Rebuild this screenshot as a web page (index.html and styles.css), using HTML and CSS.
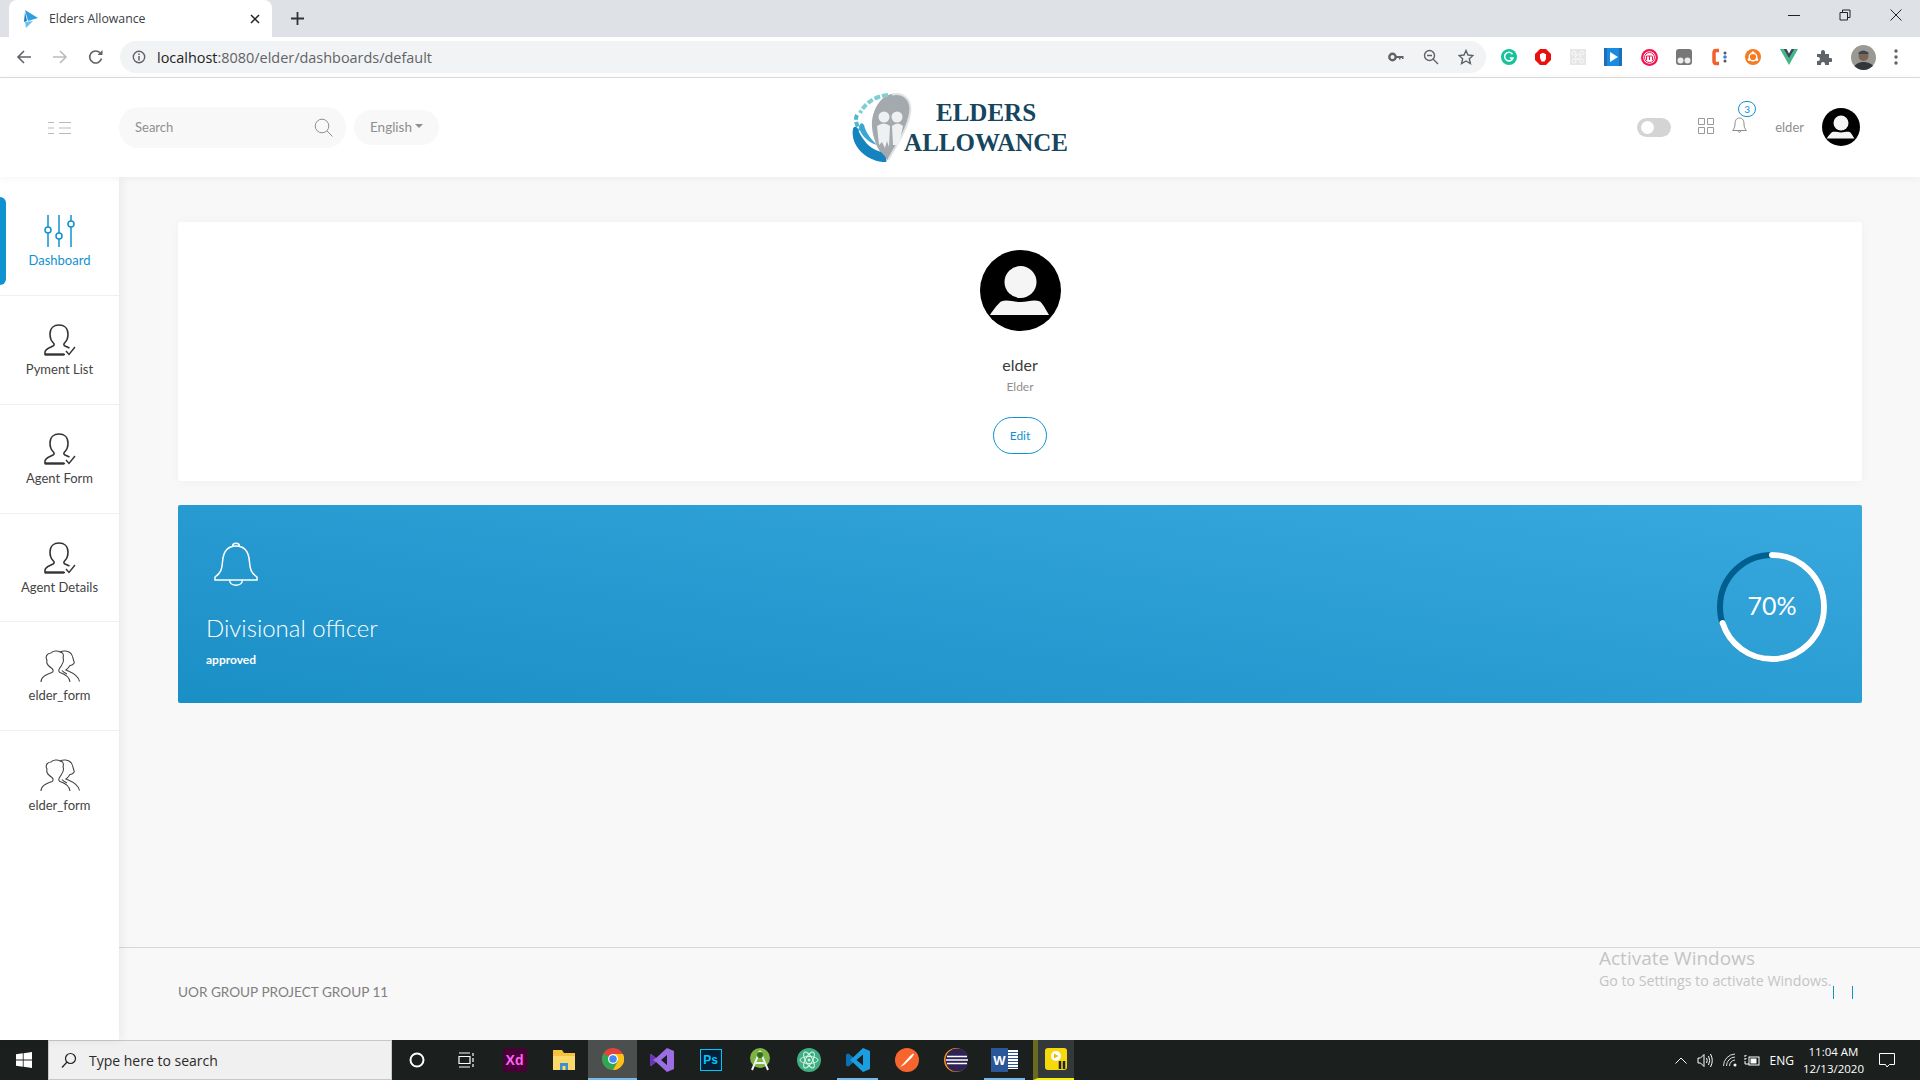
FILE: index.html
```html
<!DOCTYPE html>
<html lang="en">
<head>
    <meta charset="UTF-8">
    <meta name="viewport" content="width=device-width, initial-scale=1.0">
    <title>Elders Allowance</title>
    <link rel="stylesheet" href="styles.css">
</head>
<body>

<svg class="defs" width="0" height="0">
    <symbol id="person-check" viewBox="0 0 33 32">
        <path d="M22 30.5H2V28C2 25 6 24 10 22C11.500 21 11.500 20 10 18.500C8 16.500 7 14 7 10C7 4 11 1 16 1C21 1 25 4 25 10C25 14 24 16.500 22 18.500C20.500 20 20.500 21 22 22L26.500 24" fill="none" stroke="#333" stroke-width="1.600"/>
        <path d="M2 30.500H21" stroke="#333" stroke-width="2.200"/>
        <path d="M23 27L26 30.500L32 23" fill="none" stroke="#333" stroke-width="1.400"/>
    </symbol>
    <symbol id="people" viewBox="0 0 40 32">
        <path d="M1 32C1 27 5 25 12 22.500C13.500 21.500 13.500 20 12 18.500C8 16 6 13 7 10C5 7 7 3 11 3C13 0.500 18 0.500 20 2C23 2 24 5 23 8C25 11 22 15 19.500 18.500C18.500 20 18.500 21.500 20 22.500C26 24.500 29.500 27 30 32" fill="none" stroke="#444" stroke-width="1.100"/>
        <path d="M20 2C23 0.500 28 0.500 31 3.500C33 6 33 9 34 11.500C35 13 33 15 30 15.500C29 17 28 18.500 26 20C30 22 38 24 39.500 31.500M22 20.500C23 22 25 23 27 24" fill="none" stroke="#444" stroke-width="1.100"/>
    </symbol>
    <symbol id="avatar" viewBox="0 0 81 81">
        <circle cx="40.500" cy="40.500" r="40.500" fill="#000"/>
        <circle cx="40.500" cy="32" r="16" fill="#f5f5f5"/>
        <path d="M21 51.500C27 49 33 52 40.500 52C48 52 54 49 60 51.500C63 54 66 60 69 65H10C13 60 18 54 21 51.500Z" fill="#f5f5f5"/>
    </symbol>
</svg>

<header class="tabstrip">
    <div class="tab">
        <svg class="favicon" width="14" height="18" viewBox="0 0 14 18"><path d="M1 0L14 8L4 11Z" fill="#2d9fe0"/><path d="M1 2L3 11L0 12Z" fill="#1679bd"/><path d="M1 12L9 11L2 18Z" fill="#6cc0ee"/></svg>
        <span class="tab-title">Elders Allowance</span>
        <svg class="tab-close" width="10" height="10" viewBox="0 0 10 10"><path d="M1 1L9 9M9 1L1 9" stroke="#222" stroke-width="1.500"/></svg>
    </div>
    <svg class="tab-new" width="13" height="13" viewBox="0 0 13 13"><path d="M6.500 0V13M0 6.500H13" stroke="#333" stroke-width="1.800"/></svg>
    <div class="window-controls">
        <svg width="12" height="12" viewBox="0 0 12 12"><path d="M0 6.500H12" stroke="#222"/></svg>
        <svg width="12" height="12" viewBox="0 0 12 12"><path d="M1 3.500H8.500V11H1ZM3.500 3.500V1H11V8.500H8.500" fill="none" stroke="#222"/></svg>
        <svg width="12" height="12" viewBox="0 0 12 12"><path d="M0.500 0.500L11.500 11.500M11.500 0.500L0.500 11.500" stroke="#222"/></svg>
    </div>
</header>

<nav class="toolbar">
    <div class="toolbar-nav">
        <svg width="16" height="16" viewBox="0 0 16 16"><path d="M15 8H2M8 2L2 8L8 14" fill="none" stroke="#5f6368" stroke-width="1.600"/></svg>
        <svg width="16" height="16" viewBox="0 0 16 16"><path d="M1 8H14M8 2L14 8L8 14" fill="none" stroke="#babcbe" stroke-width="1.600"/></svg>
        <svg width="16" height="16" viewBox="0 0 16 16"><path d="M13.500 9.500A6 6 0 1 1 12 3.800" fill="none" stroke="#5f6368" stroke-width="1.600"/><path d="M14.500 1V6H9.500Z" fill="#5f6368"/></svg>
    </div>
    <div class="omnibox">
        <svg width="14" height="14" viewBox="0 0 14 14"><circle cx="7" cy="7" r="5.700" fill="none" stroke="#5f6368" stroke-width="1.400"/><path d="M7 6V10.500M7 3.500V5" stroke="#5f6368" stroke-width="1.500"/></svg>
        <span class="url"><b>localhost</b>:8080/elder/dashboards/default</span>
        <div class="omnibox-icons">
            <svg width="16" height="10" viewBox="0 0 16 10"><circle cx="4.500" cy="5" r="3.200" fill="none" stroke="#5f6368" stroke-width="2.400"/><path d="M7 4H15.500V7H14V6H12.500V7.500H11V6H7Z" fill="#5f6368"/></svg>
            <svg width="16" height="16" viewBox="0 0 16 16"><circle cx="6.500" cy="6.500" r="5" fill="none" stroke="#5f6368" stroke-width="1.400"/><path d="M4 6.500H9M10 10L15 15" stroke="#5f6368" stroke-width="1.400"/></svg>
            <svg width="16" height="16" viewBox="0 0 16 16"><path d="M8 1.500L10 6L15 6.500L11.300 9.700L12.400 14.500L8 12L3.600 14.500L4.700 9.700L1 6.500L6 6Z" fill="none" stroke="#5f6368" stroke-width="1.400"/></svg>
        </div>
    </div>
    <div class="extensions">
        <svg width="16" height="16" viewBox="0 0 16 16"><circle cx="8" cy="8" r="8" fill="#15c39a"/><path d="M11.500 5.200A4.300 4.300 0 1 0 12 9H8.800" fill="none" stroke="#fff" stroke-width="1.600"/></svg>
        <svg width="16" height="16" viewBox="0 0 16 16"><path d="M5 0H11L16 5V11L11 16H5L0 11V5Z" fill="#e8110f"/><path d="M5 9V5H6.500V4H8V4H9.500V5H11V10L9.500 12.500H6.500Z" fill="#fff"/></svg>
        <svg width="16" height="16" viewBox="0 0 16 16"><rect width="16" height="16" fill="#e6e6e6"/><circle cx="8" cy="8" r="2.500" fill="none" stroke="#fafafa"/><circle cx="4" cy="4" r="2" fill="none" stroke="#fafafa"/><circle cx="12" cy="4" r="2" fill="none" stroke="#fafafa"/><circle cx="4" cy="12" r="2" fill="none" stroke="#fafafa"/><circle cx="12" cy="12" r="2" fill="none" stroke="#fafafa"/></svg>
        <svg width="18" height="18" viewBox="0 0 18 18"><rect width="18" height="18" fill="#1d6fb8"/><rect x="3" width="12" height="18" fill="#1a8ce0"/><path d="M6 4L14 9L6 14Z" fill="#fff"/></svg>
        <svg width="17" height="17" viewBox="0 0 17 17"><circle cx="8.500" cy="8.500" r="8.500" fill="#f5124f"/><circle cx="8.500" cy="8.500" r="6.200" fill="#fff"/><circle cx="8.500" cy="8.500" r="5" fill="none" stroke="#f5124f"/><path d="M5.500 11V7H10.800Q11.500 7 11.500 8V11M8.500 7V11" fill="none" stroke="#f5124f"/></svg>
        <svg width="16" height="16" viewBox="0 0 16 16"><rect width="16" height="16" rx="3" fill="#777"/><circle cx="4.500" cy="11.500" r="3" fill="#eee"/><circle cx="11.500" cy="11.500" r="3" fill="#eee"/></svg>
        <svg width="16" height="18" viewBox="0 0 16 18"><path d="M8 2.500H5Q3 2.500 3 5V13Q3 15.500 5 15.500H8" fill="none" stroke="#f4602c" stroke-width="3.500"/><circle cx="14" cy="5" r="1.500" fill="#555"/><circle cx="14" cy="9" r="1.800" fill="#3b82e0"/><circle cx="14" cy="13" r="1.500" fill="#555"/></svg>
        <svg width="16" height="16" viewBox="0 0 16 16"><circle cx="8" cy="8" r="8" fill="#f57a20"/><circle cx="8" cy="8" r="3.800" fill="none" stroke="#fff" stroke-width="1.400"/><circle cx="8" cy="3.800" r="1.500" fill="#fff"/><circle cx="4.200" cy="10.500" r="1.500" fill="#fff"/><circle cx="11.800" cy="10.500" r="1.500" fill="#fff"/></svg>
        <svg width="18" height="16" viewBox="0 0 18 16"><path d="M0 0H3.500L9 9.500L14.500 0H18L9 16Z" fill="#41b883"/><path d="M3.500 0H6.500L9 4.500L11.500 0H14.500L9 9.500Z" fill="#35495e"/></svg>
        <svg width="16" height="16" viewBox="0 0 16 16"><path d="M1 5H5V3A2 2 0 0 1 9 3V5H13V9H14.500A2 2 0 0 1 14.500 13H13V16H9V15A2 2 0 0 0 5 15V16H1V12H2A2 2 0 0 0 2 8H1Z" fill="#5f6368"/></svg>
        <svg width="25" height="25" viewBox="0 0 25 25"><defs><clipPath id="profile-clip"><circle cx="12.500" cy="12.500" r="12.500"/></clipPath></defs><g clip-path="url(#profile-clip)"><rect width="25" height="25" fill="#9a9a94"/><path d="M2 25C3 19 8 17 12.500 17C17 17 23 19 24 25Z" fill="#33363a"/><circle cx="12.500" cy="11" r="5" fill="#7d6454"/><path d="M7 8Q12 3 18 8L17 9H8Z" fill="#3a4650"/></g></svg>
        <svg width="4" height="16" viewBox="0 0 4 16"><circle cx="2" cy="2" r="1.700" fill="#5f6368"/><circle cx="2" cy="8" r="1.700" fill="#5f6368"/><circle cx="2" cy="14" r="1.700" fill="#5f6368"/></svg>
    </div>
</nav>

<div class="app-header">
    <div class="header-left">
        <div class="menu-btn">
            <svg width="23" height="12" viewBox="0 0 23 12"><path d="M0 .5H6M0 6H6M0 11.500H6M11 .5H23M11 6H23M11 11.500H23" stroke="#b9b9b9"/></svg>
        </div>
        <div class="search-box">
            <span>Search</span>
            <svg width="19" height="19" viewBox="0 0 19 19"><circle cx="8" cy="8" r="6.800" fill="none" stroke="#8f8f8f"/><path d="M13 13L18.500 18.500" stroke="#8f8f8f"/></svg>
        </div>
        <div class="lang-pill"><span>English</span><i class="caret"></i></div>
    </div>
    <div class="logo">
        <svg class="logo-mark" width="60" height="70" viewBox="0 0 60 70">
            <path d="M40 1C52 -1 60 7 58 20C56 34 46 50 36 67C28 62 21 48 20 34C19 20 27 3 40 1Z" fill="#a4a9ae"/>
            <path d="M40 1.500C52 -1 60 7 58 20C56 34 46 50 36.500 66" fill="none" stroke="#dfe2e5" stroke-width="2"/>
            <circle cx="32" cy="24" r="5.500" fill="#eef0f2"/>
            <circle cx="45" cy="24" r="5.500" fill="#eef0f2"/>
            <path d="M25 33Q32 28 38 33L37 54L35 48L33 55L30 49L27 52ZM40 33Q46 28 51 33L47 52H41Z" fill="#eef0f2"/>
            <path d="M36 2C24 3 14 9 8 20" fill="none" stroke="#7ccfd2" stroke-width="4" stroke-dasharray="6 2"/>
            <path d="M5 22C3 26 4 32 8 37" fill="none" stroke="#4fb9c9" stroke-width="4" stroke-dasharray="5 2"/>
            <path d="M1 36C-2 52 14 69 34 69C36 66 32 62 29 59C22 57 15 52 12 47C9 43 7 40 6 36C4 33 2 33 1 36Z" fill="#1583bd"/>
            <path d="M7 34C8 41 15 49 25 52C19 46 14 40 12 32C10 29 8 30 7 34Z" fill="#3ba6d2"/>
        </svg>
        <div class="logo-text">
            <span>ELDERS</span>
            <span>ALLOWANCE</span>
        </div>
    </div>
    <div class="header-right">
        <div class="toggle"><i></i></div>
        <svg class="grid-icon" width="16" height="16" viewBox="0 0 16 16"><path d="M.5 .5H6.500V6.500H.5ZM9.500 .5H15.500V6.500H9.500ZM.5 9.500H6.500V15.500H.5ZM9.500 9.500H15.500V15.500H9.500Z" fill="none" stroke="#999"/></svg>
        <div class="bell">
            <svg width="15" height="17" viewBox="0 0 15 17"><path d="M7.500 1C4 1 3 4 3 7C3 10 2 12 .5 13.500H14.500C13 12 12 10 12 7C12 4 11 1 7.500 1ZM5.500 13.500Q7.500 17 9.500 13.500" fill="none" stroke="#8c8c8c"/></svg>
            <span class="badge">3</span>
        </div>
        <span class="user-name">elder</span>
        <svg class="header-avatar" width="38" height="38"><use href="#avatar"/></svg>
    </div>
</div>

<div class="app-body">
    <aside class="sidebar">
        <a class="nav-item active">
            <svg width="33" height="32" viewBox="0 0 33 32"><path d="M5 0V12M5 18V32M16 0V18M16 24V32M28 0V6M28 12V32" stroke="#0f92d0" stroke-width="1.500"/><circle cx="5" cy="15" r="3" fill="none" stroke="#0f92d0" stroke-width="1.500"/><circle cx="16" cy="21" r="3" fill="none" stroke="#0f92d0" stroke-width="1.500"/><circle cx="28" cy="9" r="3" fill="none" stroke="#0f92d0" stroke-width="1.500"/></svg>
            <span>Dashboard</span>
        </a>
        <a class="nav-item"><svg width="33" height="32"><use href="#person-check"/></svg><span>Pyment List</span></a>
        <a class="nav-item"><svg width="33" height="32"><use href="#person-check"/></svg><span>Agent Form</span></a>
        <a class="nav-item"><svg width="33" height="32"><use href="#person-check"/></svg><span>Agent Details</span></a>
        <a class="nav-item"><svg width="40" height="32"><use href="#people"/></svg><span>elder_form</span></a>
        <a class="nav-item"><svg width="40" height="32"><use href="#people"/></svg><span>elder_form</span></a>
    </aside>

    <main class="content">
        <section class="card profile-card">
            <svg width="81" height="81"><use href="#avatar"/></svg>
            <div class="profile-name">elder</div>
            <div class="profile-role">Elder</div>
            <button class="edit-btn">Edit</button>
        </section>

        <section class="status-card">
            <div class="status-info">
                <svg width="44" height="44" viewBox="0 0 44 44"><path d="M22 4C12 4 9 12 8.500 20C8 27 7 31 1 35V38H43V35C37 31 36 27 35.500 20C35 12 32 4 22 4ZM18.500 4.500C18.500 0 25.500 0 25.500 4.500M15.500 38C16 45 28 45 28.500 38" fill="none" stroke="#fff" stroke-width="1.500"/></svg>
                <h3>Divisional officer</h3>
                <p>approved</p>
            </div>
            <div class="ring">
                <svg width="110" height="110" viewBox="0 0 110 110">
                    <circle cx="55" cy="55" r="52" fill="none" stroke="#005f8e" stroke-width="6"/>
                    <circle class="ring-value" cx="55" cy="55" r="52" fill="none" stroke="#fff" stroke-width="6" pathLength="100" stroke-dasharray="70 30" stroke-linecap="round"/>
                </svg>
                <span>70%</span>
            </div>
        </section>

        <footer class="footer">
            <span>UOR GROUP PROJECT GROUP 11</span>
            <div class="footer-links"><i></i><i></i></div>
        </footer>
    </main>
</div>

<div class="watermark">
    <div class="wm-title">Activate Windows</div>
    <div class="wm-sub">Go to Settings to activate Windows.</div>
</div>

<div class="taskbar">
    <div class="start">
        <svg width="16" height="16" viewBox="0 0 16 16"><path d="M0 2.300L6.800 1.300V7.600H0ZM7.600 1.200L16 0V7.600H7.600ZM0 8.400H6.800V14.700L0 13.700ZM7.600 8.400H16V16L7.600 14.800Z" fill="#fff"/></svg>
    </div>
    <div class="task-search">
        <svg width="16" height="16" viewBox="0 0 16 16"><circle cx="9.500" cy="6.500" r="5" fill="none" stroke="#222" stroke-width="1.200"/><path d="M6 10L1 15.500" stroke="#222" stroke-width="1.200"/></svg>
        <span>Type here to search</span>
    </div>
    <div class="task-apps">
        <div class="task-btn"><svg width="16" height="16" viewBox="0 0 16 16"><circle cx="8" cy="8" r="6.500" fill="none" stroke="#fff" stroke-width="2"/></svg></div>
        <div class="task-btn"><svg width="16" height="16" viewBox="0 0 16 16"><path d="M1 4.500H12V11.500H1ZM1 1H12M1 15H12" fill="none" stroke="#fff" stroke-width="1.200"/><path d="M15 1V4M15 6V10M15 12V15" stroke="#fff" stroke-width="1.200"/></svg></div>
        <div class="task-btn"><span class="app-xd">Xd</span></div>
        <div class="task-btn"><svg width="22" height="20" viewBox="0 0 22 20"><path d="M0 0H9L11 3H22V20H0Z" fill="#f5c33b"/><path d="M0 6H22V20H0Z" fill="#fbd96b"/><path d="M7 20V13H15V20H12.500V16H9.500V20Z" fill="#3d8fd1"/></svg></div>
        <div class="task-btn chrome-btn">
            <svg width="22" height="22" viewBox="0 0 22 22"><circle cx="11" cy="11" r="11" fill="#e3443a"/><path d="M11 11L1.500 5.500A11 11 0 0 0 11 22L16.500 13Z" fill="#2fa751"/><path d="M11 6H21A11 11 0 0 1 11 22L16 13Z" fill="#fbc116"/><circle cx="11" cy="11" r="5" fill="#fff"/><circle cx="11" cy="11" r="3.800" fill="#4687f2"/></svg>
        </div>
        <div class="task-btn"><svg width="24" height="24" viewBox="0 0 24 24"><path d="M17 0L24 3V21L17 24L6 14L1 18L0 17V7L1 6L6 10ZM17 7L11 12L17 17Z" fill="#9b6fe3" fill-rule="evenodd"/><path d="M1 6L6 10L3 12L6 14L1 18L0 17V7Z" fill="#6a35b5"/></svg></div>
        <div class="task-btn"><span class="app-ps">Ps</span></div>
        <div class="task-btn"><svg width="22" height="24" viewBox="0 0 22 24"><circle cx="11" cy="10" r="10" fill="#7cb342"/><path d="M11 3L3 22M11 3L19 22M6 15H16" fill="none" stroke="#eee" stroke-width="2"/><circle cx="11" cy="7" r="3" fill="#33691e"/></svg></div>
        <div class="task-btn"><svg width="24" height="24" viewBox="0 0 24 24"><circle cx="12" cy="12" r="12" fill="#3fae82"/><g fill="none" stroke="#d8f5e5"><ellipse cx="12" cy="12" rx="9" ry="3.500"/><ellipse cx="12" cy="12" rx="9" ry="3.500" transform="rotate(60 12 12)"/><ellipse cx="12" cy="12" rx="9" ry="3.500" transform="rotate(120 12 12)"/></g><circle cx="12" cy="12" r="1.500" fill="#d8f5e5"/></svg></div>
        <div class="task-btn vscode-btn"><svg width="24" height="24" viewBox="0 0 24 24"><path d="M17 0L24 3V21L17 24L7 14.500L2 18.500L0 17V7L2 5.500L7 9.500ZM17 6.500L10.500 12L17 17.500Z" fill="#1b9de2" fill-rule="evenodd"/><path d="M2 5.500L7 9.500L4 12L7 14.500L2 18.500L0 17V7Z" fill="#0a6fb4"/></svg></div>
        <div class="task-btn"><svg width="24" height="24" viewBox="0 0 24 24"><circle cx="12" cy="12" r="12" fill="#f7652f"/><path d="M5 19L8 16L15 8L18 5.500L19 6.500L16.500 10L9 17Z" fill="#fff"/></svg></div>
        <div class="task-btn"><svg width="24" height="24" viewBox="0 0 24 24"><circle cx="12" cy="12" r="12" fill="#f7941e"/><circle cx="13" cy="12" r="11.500" fill="#2c2255"/><path d="M3 8.500H23M2 12H24M3 15.500H23" stroke="#fff" stroke-width="1.400"/></svg></div>
        <div class="task-btn word-btn"><span class="word-doc"></span><span class="app-word">W</span></div>
        <div class="task-btn pixel-btn"><svg width="22" height="22" viewBox="0 0 22 22"><rect width="22" height="22" rx="3" fill="#f5d90a"/><circle cx="11" cy="8" r="5" fill="#fff"/><path d="M9 5.500L13.500 8L9 10.500Z" fill="#f5b50a"/><path d="M15 13V21M19 13V21" stroke="#222" stroke-width="2.500"/></svg></div>
    </div>
    <div class="tray">
        <svg width="12" height="7" viewBox="0 0 12 7"><path d="M.5 6.500L6 1L11.500 6.500" fill="none" stroke="#fff"/></svg>
        <svg width="16" height="15" viewBox="0 0 16 15"><path d="M1 5H3.500L7 1.500V13.500L3.500 10H1ZM9.500 5Q11 7.500 9.500 10M11.500 3Q14 7.500 11.500 12M13.500 1Q17 7.500 13.500 14" fill="none" stroke="#fff"/></svg>
        <svg width="14" height="14" viewBox="0 0 14 14"><path d="M.5 13A12 12 0 0 1 12 1M3.500 13A9 9 0 0 1 12 4M6.500 13A6 6 0 0 1 12 7" fill="none" stroke="#ddd"/><circle cx="12" cy="12" r="1.500" fill="#fff"/></svg>
        <svg class="tray-battery" width="16" height="11" viewBox="0 0 16 11"><path d="M0 1H2V0M0 4H2V3M1 6V9H5" fill="none" stroke="#fff"/><rect x="5" y="2" width="10" height="8" fill="none" stroke="#fff"/><rect x="6.500" y="3.500" width="6" height="5" fill="#fff"/></svg>
        <span class="tray-lang">ENG</span>
        <div class="tray-clock"><span>11:04 AM</span><span>12/13/2020</span></div>
        <svg class="tray-note" width="16" height="15" viewBox="0 0 16 15"><path d="M.5 .5H15.500V11.500H10.500L8 14L6.500 11.500H.5Z" fill="none" stroke="#fff"/></svg>
    </div>
</div>

</body>
</html>
```

FILE: styles.css
```css
* {
    box-sizing: border-box;
}

html, body {
    margin: 0;
    height: 100%;
}

body {
    position: relative;
    display: flex;
    flex-direction: column;
    width: 1920px;
    height: 1080px;
    overflow: hidden;
    background-color: #f8f8f8;
    color: #333333;
    font-family: Lato, "Noto Sans", sans-serif;
}

svg {
    display: block;
    flex-shrink: 0;
}

.defs {
    position: absolute;
}

/* browser chrome */
.tabstrip {
    display: flex;
    align-items: center;
    height: 37px;
    padding-left: 9px;
    background-color: #dee1e6;
}

.tab {
    position: relative;
    display: flex;
    align-items: center;
    width: 263px;
    height: 37px;
    padding: 0 12px 0 15px;
    background-color: #ffffff;
    border-radius: 8px 8px 0 0;
    font-family: "Open Sans", sans-serif;
    font-size: 12.3px;
    color: #3c4043;
}

.tab-title {
    flex: 1;
    margin-left: 11px;
}

.tab-new {
    margin-left: 19px;
}

.window-controls {
    display: flex;
    gap: 39px;
    margin-left: auto;
    margin-right: 18px;
    margin-top: -7px;
}

.toolbar {
    display: flex;
    align-items: center;
    height: 41px;
    border-bottom: 1px solid #dcdcdc;
    background-color: #ffffff;
}

.toolbar-nav {
    display: flex;
    gap: 20px;
    width: 120px;
    padding-left: 16px;
}

.omnibox {
    display: flex;
    align-items: center;
    width: 1366px;
    height: 32px;
    padding: 0 12px;
    background-color: #f1f3f4;
    border-radius: 16px;
    font-family: "Open Sans", sans-serif;
    font-size: 14.45px;
    color: #5f6368;
}

.url {
    margin-left: 11px;
}

.url b {
    font-weight: 400;
    color: #202124;
}

.omnibox-icons {
    display: flex;
    align-items: center;
    gap: 19px;
    margin-left: auto;
}

.extensions {
    display: flex;
    align-items: center;
    justify-content: space-between;
    width: 434px;
    padding-left: 15px;
    padding-right: 22px;
}

/* app header */
.app-header {
    position: relative;
    z-index: 2;
    display: grid;
    grid-template-columns: 1fr auto 1fr;
    align-items: center;
    height: 99px;
    background-color: #ffffff;
    box-shadow: 0 1px 8px rgba(0, 0, 0, 0.05);
}

.header-left {
    display: flex;
    align-items: center;
}

.menu-btn {
    display: flex;
    justify-content: center;
    width: 119px;
}

.search-box {
    display: flex;
    align-items: center;
    justify-content: space-between;
    width: 227px;
    height: 41px;
    padding: 0 13px 0 16px;
    background-color: #f8f8f8;
    border-radius: 20px;
    font-size: 13px;
    color: #8f8f8f;
}

.search-box span,
.lang-pill span {
    margin-top: -2px;
}

.lang-pill {
    display: flex;
    align-items: center;
    height: 35px;
    margin-left: 8px;
    padding: 0 16px;
    background-color: #f8f8f8;
    border-radius: 18px;
    font-size: 13.5px;
    color: #8f8f8f;
}

.caret {
    margin-left: 3px;
    margin-bottom: 3px;
    border-top: 4px solid #8f8f8f;
    border-left: 4px solid transparent;
    border-right: 4px solid transparent;
}

.logo {
    position: relative;
    display: flex;
    justify-content: flex-end;
    width: 216px;
    height: 70px;
}

.logo-mark {
    position: absolute;
    left: 0;
    top: 0;
}

.logo-text {
    position: relative;
    display: flex;
    flex-direction: column;
    align-items: center;
    padding-top: 5px;
    font-family: "Liberation Serif", serif;
    font-weight: 700;
    font-size: 25px;
    line-height: 30px;
    color: #16455e;
    white-space: nowrap;
}

.header-right {
    display: flex;
    align-items: center;
    justify-content: flex-end;
    padding-right: 60px;
}

.header-avatar {
    margin-top: -1px;
}

.toggle {
    display: flex;
    align-items: center;
    width: 34px;
    height: 19px;
    padding-left: 4px;
    background-color: #d4d4d4;
    border-radius: 10px;
}

.toggle i {
    display: block;
    width: 13px;
    height: 13px;
    background-color: #ffffff;
    border-radius: 50%;
}

.grid-icon {
    margin-left: 27px;
    margin-top: -4px;
}

.bell {
    position: relative;
    margin-left: 18px;
    margin-top: -5px;
}

.badge {
    position: absolute;
    top: -16px;
    left: 6px;
    display: flex;
    align-items: center;
    justify-content: center;
    width: 18px;
    height: 16px;
    background-color: #ffffff;
    border: 1px solid #0f92d0;
    border-radius: 8px;
    font-size: 10px;
    color: #0f92d0;
}

.user-name {
    margin-left: 28px;
    margin-right: 18px;
    margin-top: -2px;
    font-size: 13px;
    color: #8f8f8f;
}

/* app body */
.app-body {
    display: flex;
    flex: 1;
    min-height: 0;
}

.sidebar {
    position: relative;
    z-index: 1;
    width: 119px;
    padding-top: 10px;
    background-color: #ffffff;
    box-shadow: 2px 0 10px rgba(0, 0, 0, 0.07);
}

.nav-item {
    position: relative;
    display: flex;
    flex-direction: column;
    align-items: center;
    height: 109px;
    padding-top: 28px;
    border-bottom: 1px solid #f0f0f0;
    font-size: 13px;
    line-height: 16px;
    color: #444444;
}

.nav-item:nth-child(4) {
    height: 108px;
}

.nav-item:last-child {
    border-bottom: none;
}

.nav-item span {
    margin-top: 5px;
}

.nav-item:last-child span {
    margin-top: 6px;
}

.nav-item.active {
    color: #0f92d0;
}

.nav-item.active::before {
    content: "";
    position: absolute;
    left: 0;
    top: 10px;
    width: 6px;
    height: 88px;
    background-color: #0f92d0;
    border-radius: 0 6px 6px 0;
}

.content {
    display: flex;
    flex: 1;
    flex-direction: column;
    gap: 24px;
    padding: 45px 58px 0 59px;
    min-width: 0;
}

.card {
    background-color: #ffffff;
    border-radius: 2px;
    box-shadow: 0 1px 12px rgba(0, 0, 0, 0.04);
}

.profile-card {
    display: flex;
    flex-direction: column;
    align-items: center;
    height: 259px;
    padding-top: 28px;
}

.profile-name {
    margin-top: 24px;
    font-size: 16px;
    line-height: 20px;
    color: #3a3a3a;
}

.profile-role {
    margin-top: 3px;
    font-size: 12px;
    line-height: 18px;
    color: #909090;
}

.edit-btn {
    width: 54px;
    height: 37px;
    margin-top: 21px;
    padding: 0;
    background-color: #ffffff;
    border: 1px solid #0f92d0;
    border-radius: 19px;
    font-family: inherit;
    font-size: 12px;
    color: #0f92d0;
}

.status-card {
    display: flex;
    align-items: center;
    justify-content: space-between;
    height: 198px;
    padding: 0 35px 0 28px;
    background-image: linear-gradient(188deg, #38a9df, #1a8fc6);
    border-radius: 2px;
    color: #ffffff;
}

.status-info {
    align-self: flex-start;
    padding-top: 37px;
}

.status-info svg {
    margin-left: 8px;
}

.status-info h3 {
    margin: 26px 0 0;
    font-size: 24px;
    line-height: 32px;
    font-weight: 300;
}

.status-info p {
    margin: 8px 0 0;
    font-size: 12px;
    line-height: 16px;
    font-weight: 700;
}

.ring {
    position: relative;
    display: flex;
    align-items: center;
    justify-content: center;
    margin-top: 6px;
    font-size: 25px;
}

.ring span {
    position: absolute;
    margin-top: -4px;
}

.ring-value {
    transform: rotate(-90deg);
    transform-origin: center;
}

.footer {
    display: flex;
    align-items: center;
    justify-content: space-between;
    height: 93px;
    margin: auto -58px 0 -59px;
    padding: 0 58px 5px 59px;
    border-top: 1px solid #d7d7d7;
    font-size: 13.6px;
    color: #808080;
}

.footer-links {
    display: flex;
    gap: 18px;
    margin-right: 9px;
    margin-top: 2px;
}

.footer-links i {
    display: block;
    width: 1px;
    height: 13px;
    background-color: #0f92d0;
}

.watermark {
    position: absolute;
    left: 1599px;
    top: 945px;
    font-family: "Open Sans", sans-serif;
    color: #c4c4c4;
}

.wm-title {
    font-size: 19px;
    line-height: 26px;
}

.wm-sub {
    font-size: 14.2px;
    line-height: 20px;
}

/* windows taskbar */
.taskbar {
    display: flex;
    align-items: center;
    height: 40px;
    background-color: #1b1f1e;
    color: #ffffff;
    font-family: "Open Sans", sans-serif;
}

.start {
    display: flex;
    flex-shrink: 0;
    align-items: center;
    justify-content: center;
    width: 48px;
}

.task-search {
    display: flex;
    flex-shrink: 0;
    align-items: center;
    width: 344px;
    height: 40px;
    padding-left: 12px;
    background-color: #f0f0f0;
    border: 1px solid #c8c8c8;
    border-left-width: 1px;
    font-size: 14px;
    color: #2a2a2a;
}

.task-search span {
    margin-left: 12px;
}

.task-apps {
    display: flex;
    flex-shrink: 0;
}

.task-btn {
    position: relative;
    display: flex;
    align-items: center;
    justify-content: center;
    width: 49px;
    height: 40px;
}

.chrome-btn {
    background-color: #4b4f4e;
    border-bottom: 2px solid #76b9ed;
}

.vscode-btn::after,
.word-btn::after {
    content: "";
    position: absolute;
    left: 4px;
    right: 4px;
    bottom: 0;
    height: 2px;
    background-color: #76b9ed;
}

.pixel-btn {
    margin-left: 4px;
    width: 41px;
    background-color: #33383a;
    border-left: 5px solid #6b6b20;
    border-bottom: 2px solid #f7f000;
}

.app-xd {
    display: flex;
    align-items: center;
    justify-content: center;
    width: 24px;
    height: 24px;
    background-color: #470137;
    border-radius: 3px;
    font-family: "Liberation Sans", sans-serif;
    font-size: 14px;
    font-weight: 700;
    color: #ff61f6;
}

.app-ps {
    display: flex;
    align-items: center;
    justify-content: center;
    width: 22px;
    height: 22px;
    background-color: #001e36;
    border: 1px solid #00c8ff;
    font-family: "Liberation Sans", sans-serif;
    font-size: 12px;
    font-weight: 700;
    color: #00c8ff;
}

.word-doc {
    position: absolute;
    left: 24px;
    top: 10px;
    width: 14px;
    height: 19px;
    background-color: #ffffff;
    background-image: repeating-linear-gradient(#ffffff 0 2px, #2b579a 2px 3px);
}

.app-word {
    position: relative;
    display: flex;
    align-items: center;
    justify-content: center;
    width: 17px;
    height: 24px;
    margin-right: 10px;
    background-color: #2b579a;
    font-family: "Liberation Sans", sans-serif;
    font-size: 13px;
    font-weight: 700;
    color: #ffffff;
}

.tray {
    flex: 1;
    display: flex;
    align-items: center;
    justify-content: flex-end;
    gap: 10px;
    padding-right: 25px;
    font-size: 12px;
}

.tray-battery {
    margin-left: -3px;
}

.tray-clock {
    display: flex;
    flex-direction: column;
    align-items: center;
    margin-left: -1px;
    font-size: 11.5px;
    line-height: 17px;
}

.tray-note {
    margin-left: 5px;
}
```
